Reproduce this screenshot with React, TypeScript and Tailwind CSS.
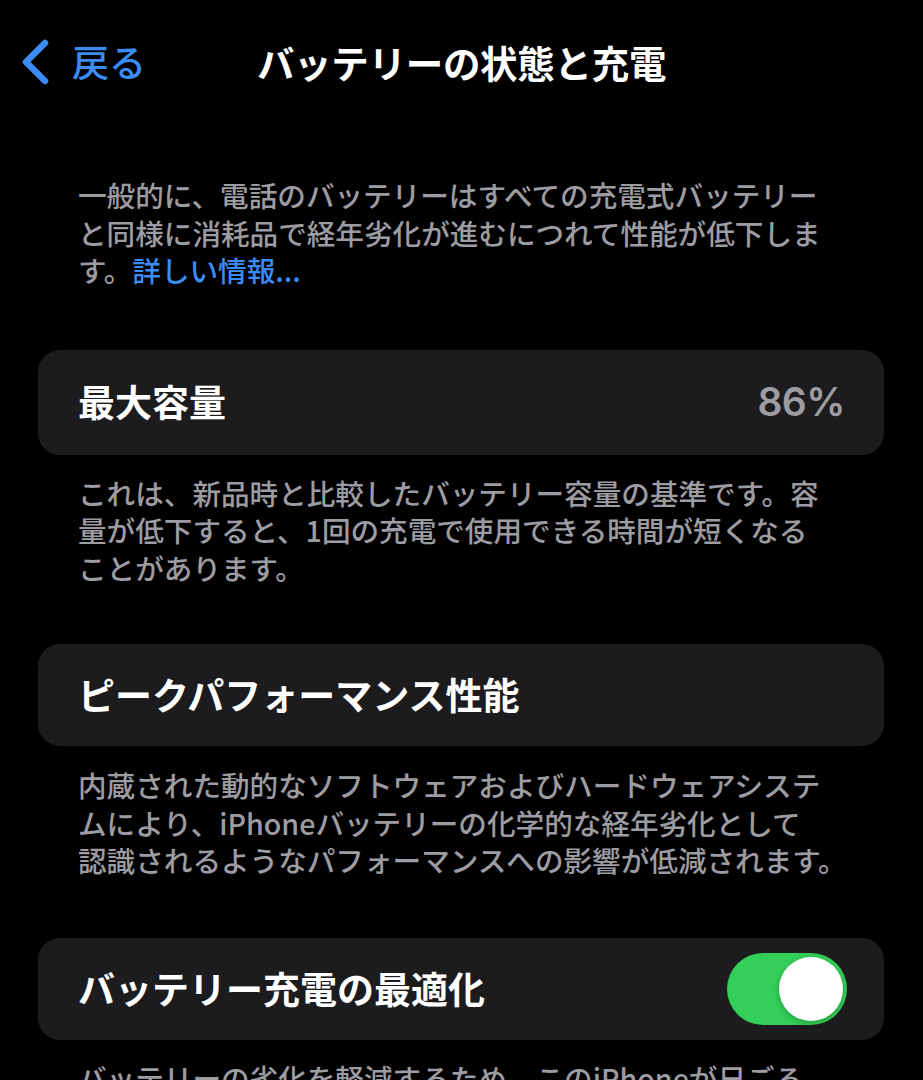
const jp = { fontFamily: '"Noto Sans CJK JP", "Noto Sans", sans-serif' };

function Chevron() {
  return (
    <svg width="30" height="46" viewBox="0 0 30 46" fill="none" className="shrink-0">
      <path d="M25 4 L6 23 L25 42" stroke="#3a8cf6" strokeWidth="6.5" strokeLinecap="round" strokeLinejoin="round" />
    </svg>
  );
}

function Toggle({ on }: { on: boolean }) {
  return (
    <div className={`flex h-[72px] w-[120px] items-center rounded-full p-[4px] ${on ? "justify-end bg-[#33cf58]" : "justify-start bg-[#39393d]"}`}>
      <div className="h-[64px] w-[64px] rounded-full bg-white shadow-[0_2px_6px_rgba(0,0,0,0.25)]" />
    </div>
  );
}

function Footnote({ lines, className = "" }: { lines: React.ReactNode[]; className?: string }) {
  return (
    <p className={`px-10 text-[28.6px] leading-[37.5px] font-medium text-[#9c9ca2] whitespace-nowrap ${className}`}>
      {lines.map((l, i) => (
        <span key={i} className="block">
          {l}
        </span>
      ))}
    </p>
  );
}

export default function App() {
  return (
    <div className="h-screen overflow-hidden bg-black text-white" style={jp}>
      <header className="grid h-[124px] grid-cols-[1fr_auto_1fr] items-center">
        <div className="flex items-center gap-[22px] pl-[20px] text-[37px] font-medium text-[#3a8cf6]">
          <Chevron />
          <span>戻る</span>
        </div>
        <h1 className="text-[37.5px] font-bold tracking-[-0.3px]">バッテリーの状態と充電</h1>
        <div />
      </header>

      <div className="px-[38px] pr-[39px]">
        <Footnote
          className="mt-[52px]"
          lines={[
            "一般的に、電話のバッテリーはすべての充電式バッテリー",
            "と同様に消耗品で経年劣化が進むにつれて性能が低下しま",
            <>
              す。<span className="text-[#3a8cf6]">詳しい情報...</span>
            </>,
          ]}
        />

        <div className="mt-[61px] flex h-[105px] items-center justify-between rounded-[22px] bg-[#1c1c1e] pl-10 pr-[39px]">
          <span className="text-[37px] font-semibold">最大容量</span>
          <span className="text-[39px] font-semibold tracking-[-0.5px] text-[#9c9ca2]" style={{ fontFamily: "Inter, sans-serif" }}>
            86%
          </span>
        </div>
        <Footnote
          className="mt-[19px]"
          lines={[
            "これは、新品時と比較したバッテリー容量の基準です。容",
            "量が低下すると、1回の充電で使用できる時間が短くなる",
            "ことがあります。",
          ]}
        />

        <div className="mt-[58px] flex h-[102px] items-center rounded-[22px] bg-[#1c1c1e] pl-10 pr-[39px]">
          <span className="text-[37px] font-semibold">ピークパフォーマンス性能</span>
        </div>
        <Footnote
          className="mt-[20px]"
          lines={[
            "内蔵された動的なソフトウェアおよびハードウェアシステ",
            "ムにより、iPhoneバッテリーの化学的な経年劣化として",
            "認識されるようなパフォーマンスへの影響が低減されます。",
          ]}
        />

        <div className="mt-[59px] flex h-[102px] items-center justify-between rounded-[22px] bg-[#1c1c1e] pl-10 pr-[37px]">
          <span className="text-[37px] font-semibold">バッテリー充電の最適化</span>
          <Toggle on />
        </div>
        <Footnote
          className="mt-[19px]"
          lines={["バッテリーの劣化を軽減するため、このiPhoneが日ごろ"]}
        />
      </div>
    </div>
  );
}
